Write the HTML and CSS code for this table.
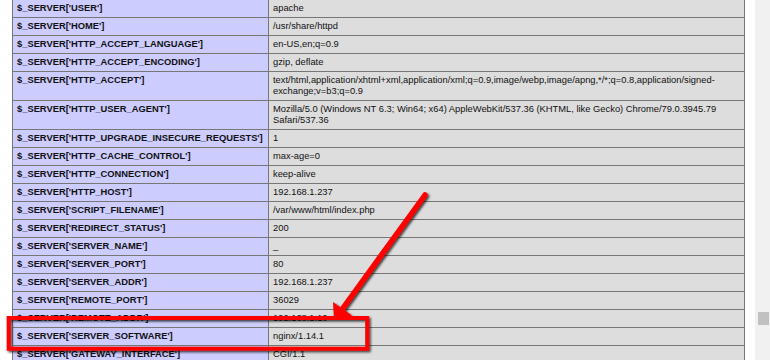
FILE: index.html
```html
<!DOCTYPE html>
<html lang="en">
<head>
<meta charset="utf-8">
<title>phpinfo()</title>
<link rel="stylesheet" href="styles.css">
</head>
<body>
<div class="page">
  <div class="main">
    <table class="info">
      <colgroup><col class="col-e"><col class="col-v"></colgroup>
      <tr><td class="e">$_SERVER['USER']</td><td class="v">apache</td></tr>
      <tr><td class="e">$_SERVER['HOME']</td><td class="v">/usr/share/httpd</td></tr>
      <tr><td class="e">$_SERVER['HTTP_ACCEPT_LANGUAGE']</td><td class="v">en-US,en;q=0.9</td></tr>
      <tr><td class="e">$_SERVER['HTTP_ACCEPT_ENCODING']</td><td class="v">gzip, deflate</td></tr>
      <tr><td class="e">$_SERVER['HTTP_ACCEPT']</td><td class="v">text/html,application/xhtml+xml,application/xml;q=0.9,image/webp,image/apng,*/*;q=0.8,application/signed-exchange;v=b3;q=0.9</td></tr>
      <tr><td class="e">$_SERVER['HTTP_USER_AGENT']</td><td class="v">Mozilla/5.0 (Windows NT 6.3; Win64; x64) AppleWebKit/537.36 (KHTML, like Gecko) Chrome/79.0.3945.79 Safari/537.36</td></tr>
      <tr><td class="e">$_SERVER['HTTP_UPGRADE_INSECURE_REQUESTS']</td><td class="v">1</td></tr>
      <tr><td class="e">$_SERVER['HTTP_CACHE_CONTROL']</td><td class="v">max-age=0</td></tr>
      <tr><td class="e">$_SERVER['HTTP_CONNECTION']</td><td class="v">keep-alive</td></tr>
      <tr><td class="e">$_SERVER['HTTP_HOST']</td><td class="v">192.168.1.237</td></tr>
      <tr><td class="e">$_SERVER['SCRIPT_FILENAME']</td><td class="v">/var/www/html/index.php</td></tr>
      <tr><td class="e">$_SERVER['REDIRECT_STATUS']</td><td class="v">200</td></tr>
      <tr><td class="e">$_SERVER['SERVER_NAME']</td><td class="v">_</td></tr>
      <tr><td class="e">$_SERVER['SERVER_PORT']</td><td class="v">80</td></tr>
      <tr><td class="e">$_SERVER['SERVER_ADDR']</td><td class="v">192.168.1.237</td></tr>
      <tr><td class="e">$_SERVER['REMOTE_PORT']</td><td class="v">36029</td></tr>
      <tr><td class="e">$_SERVER['REMOTE_ADDR']</td><td class="v">192.168.1.10</td></tr>
      <tr><td class="e">$_SERVER['SERVER_SOFTWARE']</td><td class="v">nginx/1.14.1</td></tr>
      <tr><td class="e">$_SERVER['GATEWAY_INTERFACE']</td><td class="v">CGI/1.1</td></tr>
    </table>
  </div>
  <div class="scrollbar"><div class="thumb"></div></div>
</div>
<svg class="annot" width="770" height="360" viewBox="0 0 770 360" aria-hidden="true">
  <defs>
    <filter id="shadow" x="-20%" y="-20%" width="140%" height="140%">
      <feDropShadow dx="1.5" dy="1.5" stdDeviation="1.2" flood-color="#000" flood-opacity="0.75"/>
    </filter>
  </defs>
  <g filter="url(#shadow)">
    <rect x="8.7" y="318" width="358.5" height="30.7" fill="none" stroke="#f00" stroke-width="4"/>
    <line x1="425" y1="195" x2="343" y2="308" stroke="#f00" stroke-width="5.5" stroke-linecap="round"/>
    <polygon points="334,320 352,315.5 333,302" fill="#f00"/>
  </g>
</svg>
</body>
</html>
```

FILE: styles.css
```css
html, body {
  margin: 0;
  padding: 0;
  background: #fff;
}

body {
  position: relative;
  width: 770px;
  height: 360px;
  overflow: hidden;
  font-family: "Liberation Sans", Arial, sans-serif;
  color: #111;
}

.page {
  display: flex;
  height: 360px;
}

.main {
  flex: 1;
  padding-left: 12px;
}

.info {
  border-collapse: collapse;
  table-layout: fixed;
  width: 732px;
  margin-top: -1px;
}

.col-e { width: 256px; }
.col-v { width: 476px; }

.info td {
  border: 1px solid #777;
  font-size: 9.35px;
  line-height: 11px;
  padding: 3px 4px;
  vertical-align: baseline;
}

.e {
  background: #ccf;
  font-weight: bold;
  white-space: nowrap;
}

.v {
  background: #ddd;
}

.scrollbar {
  width: 15px;
  background: #f1f1f1;
  padding-left: 3px;
  box-sizing: border-box;
}

.thumb {
  width: 11px;
  height: 13px;
  margin-top: 312px;
  background: #c1c1c1;
}

.annot {
  position: absolute;
  top: 0;
  left: 0;
  pointer-events: none;
}
```
